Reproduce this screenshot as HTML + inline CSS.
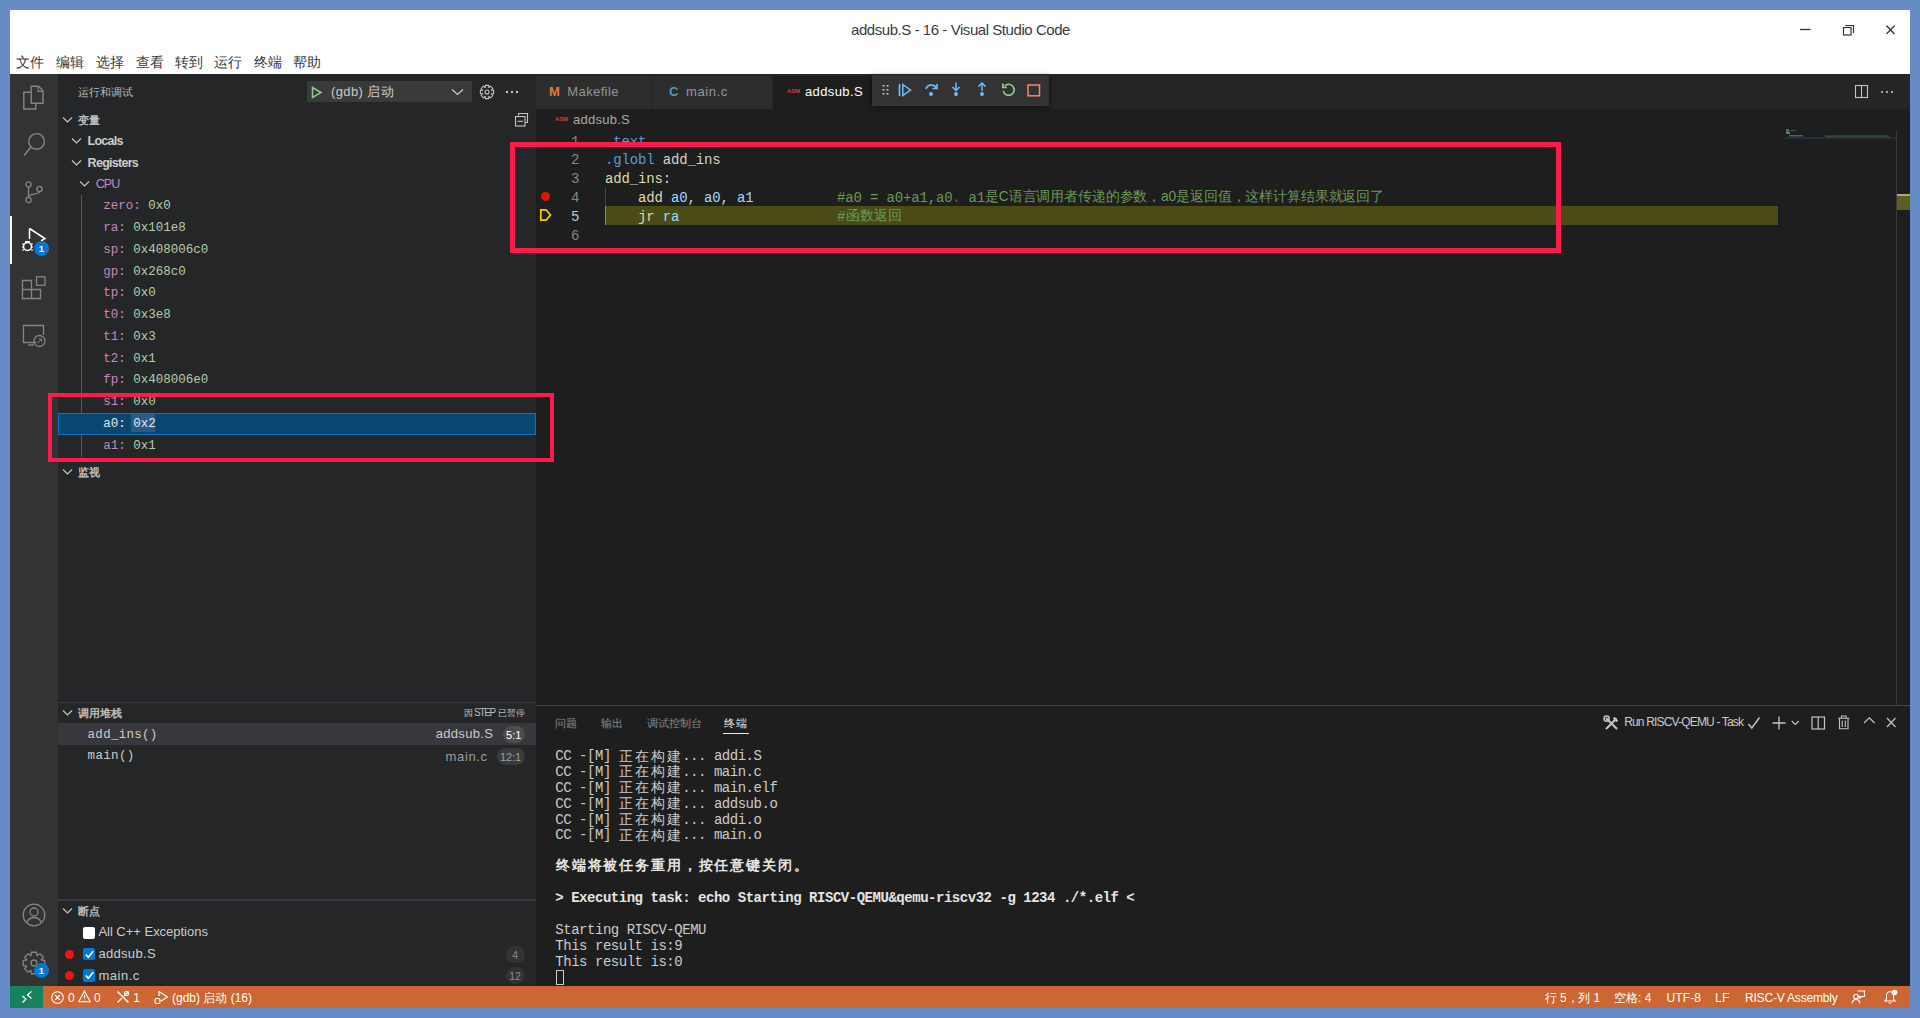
<!DOCTYPE html>
<html><head><meta charset="utf-8"><style>*{margin:0;padding:0;box-sizing:border-box}html,body{width:1920px;height:1018px;overflow:hidden;background:#678bc4}.a{position:absolute;white-space:pre}svg.a{overflow:visible}</style></head><body>
<div class="a" style="left:10px;top:10px;width:1900px;height:64px;background:#ffffff;"></div>
<div class="a" style="left:10px;top:74px;width:1900px;height:912px;background:#1e1e1e;"></div>
<div class="a t" id="t0" style="left:851px;top:20.00px;line-height:20px;font-family:'Liberation Sans',sans-serif;font-size:15px;font-weight:400;color:#3b3b3b;letter-spacing:-0.443px;">addsub.S - 16 - Visual Studio Code</div>
<svg class="a" style="left:1798px;top:22px;" width="100" height="16" viewBox="0 0 100 16"><line x1="2" y1="7.5" x2="12.5" y2="7.5" stroke="#333" stroke-width="1.3"/><rect x="45.5" y="5.5" width="7.5" height="7.5" fill="none" stroke="#333" stroke-width="1.2"/><path d="M47.5 3.5 H55.5 V11" fill="none" stroke="#333" stroke-width="1.2"/><path d="M88.5 3.8 L96.5 12 M96.5 3.8 L88.5 12" stroke="#333" stroke-width="1.3"/></svg>
<div class="a t" id="t1" style="left:16px;top:53.00px;line-height:20px;font-family:'Liberation Sans',sans-serif;font-size:13.5px;font-weight:400;color:#3a3a3a;letter-spacing:0.000px;">文件</div>
<div class="a t" id="t2" style="left:56px;top:53.00px;line-height:20px;font-family:'Liberation Sans',sans-serif;font-size:13.5px;font-weight:400;color:#3a3a3a;letter-spacing:0.000px;">编辑</div>
<div class="a t" id="t3" style="left:96px;top:53.00px;line-height:20px;font-family:'Liberation Sans',sans-serif;font-size:13.5px;font-weight:400;color:#3a3a3a;letter-spacing:0.000px;">选择</div>
<div class="a t" id="t4" style="left:135.5px;top:53.00px;line-height:20px;font-family:'Liberation Sans',sans-serif;font-size:13.5px;font-weight:400;color:#3a3a3a;letter-spacing:0.000px;">查看</div>
<div class="a t" id="t5" style="left:174.5px;top:53.00px;line-height:20px;font-family:'Liberation Sans',sans-serif;font-size:13.5px;font-weight:400;color:#3a3a3a;letter-spacing:0.000px;">转到</div>
<div class="a t" id="t6" style="left:214px;top:53.00px;line-height:20px;font-family:'Liberation Sans',sans-serif;font-size:13.5px;font-weight:400;color:#3a3a3a;letter-spacing:0.000px;">运行</div>
<div class="a t" id="t7" style="left:254px;top:53.00px;line-height:20px;font-family:'Liberation Sans',sans-serif;font-size:13.5px;font-weight:400;color:#3a3a3a;letter-spacing:0.000px;">终端</div>
<div class="a t" id="t8" style="left:293px;top:53.00px;line-height:20px;font-family:'Liberation Sans',sans-serif;font-size:13.5px;font-weight:400;color:#3a3a3a;letter-spacing:0.000px;">帮助</div>
<div class="a" style="left:10px;top:74px;width:48px;height:912px;background:#333333;"></div>
<div class="a" style="left:10px;top:216px;width:2px;height:48px;background:#ffffff;"></div>
<svg class="a" style="left:22px;top:85px;" width="24" height="25" viewBox="0 0 24 25"><path d="M9.2 1.3 H16.5 L21 5.8 V18.2 H9.2 Z" fill="none" stroke="#858585" stroke-width="1.4"/><path d="M16 1.5 V6.3 H21" fill="none" stroke="#858585" stroke-width="1.2"/><path d="M9.2 7.3 H1.8 V24 H13.8 V18.2" fill="none" stroke="#858585" stroke-width="1.4"/></svg>
<svg class="a" style="left:22px;top:132px;" width="24" height="24" viewBox="0 0 24 24"><circle cx="14.6" cy="9.4" r="7.8" fill="none" stroke="#858585" stroke-width="1.4"/><path d="M9 15 L2 23.5" stroke="#858585" stroke-width="1.5"/></svg>
<svg class="a" style="left:22px;top:180px;" width="24" height="24" viewBox="0 0 24 24"><circle cx="6.5" cy="4.5" r="2.6" fill="none" stroke="#858585" stroke-width="1.3"/><circle cx="17.5" cy="9" r="2.6" fill="none" stroke="#858585" stroke-width="1.3"/><circle cx="6.5" cy="20" r="2.6" fill="none" stroke="#858585" stroke-width="1.3"/><path d="M6.5 7 V17.5 M17.5 11.5 C17.5 15 6.5 13 6.5 17" fill="none" stroke="#858585" stroke-width="1.3"/></svg>
<svg class="a" style="left:20px;top:226px;" width="28" height="28" viewBox="0 0 28 28"><path d="M9.5 2.5 V13 M9.5 2.5 L25 12.5 L21 15" fill="none" stroke="#fff" stroke-width="1.5"/><circle cx="7.5" cy="20.5" r="4" fill="none" stroke="#fff" stroke-width="1.5"/><path d="M2 18 H4 M2 21 H4 M2 24 H4 M11 18 H13 M11 21 H13 M11 24 H13 M5 15.5 L10 15.5" stroke="#fff" stroke-width="1.2"/></svg>
<div class="a" style="left:34px;top:240.5px;width:15px;height:15px;border-radius:50%;background:#0078d4;color:#fff;font:bold 9.5px/15px 'Liberation Sans';text-align:center">1</div>
<svg class="a" style="left:22px;top:276px;" width="24" height="24" viewBox="0 0 24 24"><path d="M0.5 4.5 H9.5 V13.5 H18.5 V22.5 H0.5 Z M0.5 13.5 H9.5 V22.5" fill="none" stroke="#858585" stroke-width="1.3"/><rect x="14.5" y="0.8" width="8.5" height="8.5" fill="none" stroke="#858585" stroke-width="1.3"/></svg>
<svg class="a" style="left:22px;top:324px;" width="24" height="24" viewBox="0 0 24 24"><path d="M14 18.5 H1.5 V1.5 H21.5 V11" fill="none" stroke="#858585" stroke-width="1.3"/><path d="M6 21 H12" stroke="#858585" stroke-width="1.3"/><circle cx="17.5" cy="17" r="5.5" fill="none" stroke="#858585" stroke-width="1.3"/><path d="M15.5 19 L19.5 15 M17 15 H19.5 V17.5" fill="none" stroke="#858585" stroke-width="1"/></svg>
<svg class="a" style="left:22px;top:903px;" width="24" height="24" viewBox="0 0 24 24"><circle cx="12" cy="12" r="10.8" fill="none" stroke="#858585" stroke-width="1.3"/><circle cx="12" cy="9" r="4" fill="none" stroke="#858585" stroke-width="1.3"/><path d="M4.8 19.5 C6.5 15.5 9 14.5 12 14.5 C15 14.5 17.5 15.5 19.2 19.5" fill="none" stroke="#858585" stroke-width="1.3"/></svg>
<svg class="a" style="left:22px;top:951px;" width="24" height="24" viewBox="0 0 24 24"><polygon points="22.73,9.60 22.73,14.40 19.55,15.19 19.60,15.08 21.29,17.89 17.89,21.29 15.08,19.60 15.19,19.55 14.40,22.73 9.60,22.73 8.81,19.55 8.92,19.60 6.11,21.29 2.71,17.89 4.40,15.08 4.45,15.19 1.27,14.40 1.27,9.60 4.45,8.81 4.40,8.92 2.71,6.11 6.11,2.71 8.92,4.40 8.81,4.45 9.60,1.27 14.40,1.27 15.19,4.45 15.08,4.40 17.89,2.71 21.29,6.11 19.60,8.92 19.55,8.81" fill="none" stroke="#858585" stroke-width="1.3"/><circle cx="12" cy="12" r="3" fill="none" stroke="#858585" stroke-width="1.3"/></svg>
<div class="a" style="left:34px;top:962.5px;width:15px;height:15px;border-radius:50%;background:#0078d4;color:#fff;font:bold 9.5px/15px 'Liberation Sans';text-align:center">1</div>
<div class="a" style="left:58px;top:74px;width:478px;height:912px;background:#252628;"></div>
<div class="a t" id="t9" style="left:77.5px;top:82.00px;line-height:20px;font-family:'Liberation Sans',sans-serif;font-size:11px;font-weight:400;color:#bbbbbb;letter-spacing:0.200px;">运行和调试</div>
<div class="a" style="left:307px;top:81px;width:165px;height:21px;background:#3a3a3a;"></div>
<svg class="a" style="left:311px;top:86px;" width="12" height="13" viewBox="0 0 12 13"><path d="M1.5 1.5 L10 6.5 L1.5 11.5 Z" fill="none" stroke="#89d185" stroke-width="1.5"/></svg>
<div class="a t" id="t10" style="left:331px;top:82.00px;line-height:20px;font-family:'Liberation Sans',sans-serif;font-size:13px;font-weight:400;color:#cccccc;letter-spacing:0.379px;">(gdb) 启动</div>
<svg class="a" style="left:451px;top:88px;" width="13" height="8" viewBox="0 0 13 8"><path d="M1 1.5 L6.5 6.5 L12 1.5" fill="none" stroke="#cccccc" stroke-width="1.2"/></svg>
<svg class="a" style="left:479px;top:84px;" width="16" height="16" viewBox="0 0 16 16"><polygon points="14.61,6.38 14.61,9.62 12.57,10.04 12.67,9.79 13.81,11.53 11.53,13.81 9.79,12.67 10.04,12.57 9.62,14.61 6.38,14.61 5.96,12.57 6.21,12.67 4.47,13.81 2.19,11.53 3.33,9.79 3.43,10.04 1.39,9.62 1.39,6.38 3.43,5.96 3.33,6.21 2.19,4.47 4.47,2.19 6.21,3.33 5.96,3.43 6.38,1.39 9.62,1.39 10.04,3.43 9.79,3.33 11.53,2.19 13.81,4.47 12.67,6.21 12.57,5.96" fill="none" stroke="#c5c5c5" stroke-width="1.1"/><circle cx="8" cy="8" r="2" fill="none" stroke="#c5c5c5" stroke-width="1.1"/></svg>
<svg class="a" style="left:505px;top:90px;" width="16" height="4" viewBox="0 0 16 4"><circle cx="2" cy="2" r="1.2" fill="#c5c5c5"/><circle cx="7" cy="2" r="1.2" fill="#c5c5c5"/><circle cx="12" cy="2" r="1.2" fill="#c5c5c5"/></svg>
<svg class="a" style="left:514px;top:112px;" width="16" height="16" viewBox="0 0 16 16"><path d="M4.5 3.5 V1.5 H13.5 V10.5 H11.5" fill="none" stroke="#c5c5c5" stroke-width="1.1"/><rect x="1.5" y="4.5" width="9.5" height="9.5" fill="none" stroke="#c5c5c5" stroke-width="1.1"/><path d="M3.5 9.3 H9" stroke="#c5c5c5" stroke-width="1.1"/></svg>
<svg class="a" style="left:62px;top:115.5px;" width="12" height="8" viewBox="0 0 12 8"><path d="M1 1.5 L5.5 6 L10 1.5" fill="none" stroke="#c5c5c5" stroke-width="1.2"/></svg>
<div class="a t" id="t11" style="left:77.5px;top:109.50px;line-height:20px;font-family:'Liberation Sans',sans-serif;font-size:11px;font-weight:700;color:#bbbbbb;letter-spacing:0.500px;">变量</div>
<svg class="a" style="left:71px;top:137px;" width="12" height="8" viewBox="0 0 12 8"><path d="M1 1.5 L5.5 6 L10 1.5" fill="none" stroke="#c5c5c5" stroke-width="1.2"/></svg>
<div class="a t" id="t12" style="left:87.6px;top:131.00px;line-height:20px;font-family:'Liberation Sans',sans-serif;font-size:12.5px;font-weight:700;color:#cccccc;letter-spacing:-0.768px;">Locals</div>
<svg class="a" style="left:71px;top:159px;" width="12" height="8" viewBox="0 0 12 8"><path d="M1 1.5 L5.5 6 L10 1.5" fill="none" stroke="#c5c5c5" stroke-width="1.2"/></svg>
<div class="a t" id="t13" style="left:87.6px;top:153.00px;line-height:20px;font-family:'Liberation Sans',sans-serif;font-size:12.5px;font-weight:700;color:#cccccc;letter-spacing:-0.720px;">Registers</div>
<svg class="a" style="left:79px;top:180px;" width="12" height="8" viewBox="0 0 12 8"><path d="M1 1.5 L5.5 6 L10 1.5" fill="none" stroke="#c5c5c5" stroke-width="1.2"/></svg>
<div class="a t" id="t14" style="left:95.8px;top:174.00px;line-height:20px;font-family:'Liberation Sans',sans-serif;font-size:12.5px;font-weight:400;color:#c586c0;letter-spacing:-0.969px;">CPU</div>
<div class="a" style="left:81px;top:195px;width:1px;height:262px;background:#585858;"></div>
<div class="a t" id="t15" style="left:103.3px;top:196.40px;line-height:20px;font-family:'Liberation Mono',monospace;font-size:12.5px;font-weight:400;color:#c586c0;letter-spacing:0.0px">zero:</div>
<div class="a t" id="t16" style="left:148.3px;top:196.40px;line-height:20px;font-family:'Liberation Mono',monospace;font-size:12.5px;font-weight:400;color:#b5cea8;letter-spacing:0.0px">0x0</div>
<div class="a t" id="t17" style="left:103.3px;top:218.16px;line-height:20px;font-family:'Liberation Mono',monospace;font-size:12.5px;font-weight:400;color:#c586c0;letter-spacing:0.0px">ra:</div>
<div class="a t" id="t18" style="left:133.3px;top:218.16px;line-height:20px;font-family:'Liberation Mono',monospace;font-size:12.5px;font-weight:400;color:#b5cea8;letter-spacing:0.0px">0x101e8</div>
<div class="a t" id="t19" style="left:103.3px;top:239.92px;line-height:20px;font-family:'Liberation Mono',monospace;font-size:12.5px;font-weight:400;color:#c586c0;letter-spacing:0.0px">sp:</div>
<div class="a t" id="t20" style="left:133.3px;top:239.92px;line-height:20px;font-family:'Liberation Mono',monospace;font-size:12.5px;font-weight:400;color:#b5cea8;letter-spacing:0.0px">0x408006c0</div>
<div class="a t" id="t21" style="left:103.3px;top:261.68px;line-height:20px;font-family:'Liberation Mono',monospace;font-size:12.5px;font-weight:400;color:#c586c0;letter-spacing:0.0px">gp:</div>
<div class="a t" id="t22" style="left:133.3px;top:261.68px;line-height:20px;font-family:'Liberation Mono',monospace;font-size:12.5px;font-weight:400;color:#b5cea8;letter-spacing:0.0px">0x268c0</div>
<div class="a t" id="t23" style="left:103.3px;top:283.44px;line-height:20px;font-family:'Liberation Mono',monospace;font-size:12.5px;font-weight:400;color:#c586c0;letter-spacing:0.0px">tp:</div>
<div class="a t" id="t24" style="left:133.3px;top:283.44px;line-height:20px;font-family:'Liberation Mono',monospace;font-size:12.5px;font-weight:400;color:#b5cea8;letter-spacing:0.0px">0x0</div>
<div class="a t" id="t25" style="left:103.3px;top:305.20px;line-height:20px;font-family:'Liberation Mono',monospace;font-size:12.5px;font-weight:400;color:#c586c0;letter-spacing:0.0px">t0:</div>
<div class="a t" id="t26" style="left:133.3px;top:305.20px;line-height:20px;font-family:'Liberation Mono',monospace;font-size:12.5px;font-weight:400;color:#b5cea8;letter-spacing:0.0px">0x3e8</div>
<div class="a t" id="t27" style="left:103.3px;top:326.96px;line-height:20px;font-family:'Liberation Mono',monospace;font-size:12.5px;font-weight:400;color:#c586c0;letter-spacing:0.0px">t1:</div>
<div class="a t" id="t28" style="left:133.3px;top:326.96px;line-height:20px;font-family:'Liberation Mono',monospace;font-size:12.5px;font-weight:400;color:#b5cea8;letter-spacing:0.0px">0x3</div>
<div class="a t" id="t29" style="left:103.3px;top:348.72px;line-height:20px;font-family:'Liberation Mono',monospace;font-size:12.5px;font-weight:400;color:#c586c0;letter-spacing:0.0px">t2:</div>
<div class="a t" id="t30" style="left:133.3px;top:348.72px;line-height:20px;font-family:'Liberation Mono',monospace;font-size:12.5px;font-weight:400;color:#b5cea8;letter-spacing:0.0px">0x1</div>
<div class="a t" id="t31" style="left:103.3px;top:370.48px;line-height:20px;font-family:'Liberation Mono',monospace;font-size:12.5px;font-weight:400;color:#c586c0;letter-spacing:0.0px">fp:</div>
<div class="a t" id="t32" style="left:133.3px;top:370.48px;line-height:20px;font-family:'Liberation Mono',monospace;font-size:12.5px;font-weight:400;color:#b5cea8;letter-spacing:0.0px">0x408006e0</div>
<div class="a t" id="t33" style="left:103.3px;top:392.24px;line-height:20px;font-family:'Liberation Mono',monospace;font-size:12.5px;font-weight:400;color:#c586c0;letter-spacing:0.0px">s1:</div>
<div class="a t" id="t34" style="left:133.3px;top:392.24px;line-height:20px;font-family:'Liberation Mono',monospace;font-size:12.5px;font-weight:400;color:#b5cea8;letter-spacing:0.0px">0x0</div>
<div class="a" style="left:57.5px;top:413.00000000000006px;width:478.5px;height:22.3px;background:#094771;border:1.5px solid #0b72bf;"></div>
<div class="a" style="left:131px;top:414.20000000000005px;width:24px;height:18px;background:#285b85;"></div>
<div class="a t" id="t35" style="left:103.3px;top:414.00px;line-height:20px;font-family:'Liberation Mono',monospace;font-size:12.5px;font-weight:400;color:#e8e8e8;letter-spacing:0.0px">a0:</div>
<div class="a t" id="t36" style="left:133.3px;top:414.00px;line-height:20px;font-family:'Liberation Mono',monospace;font-size:12.5px;font-weight:400;color:#e8e8e8;letter-spacing:0.0px">0x2</div>
<div class="a t" id="t37" style="left:103.3px;top:435.76px;line-height:20px;font-family:'Liberation Mono',monospace;font-size:12.5px;font-weight:400;color:#c586c0;letter-spacing:0.0px">a1:</div>
<div class="a t" id="t38" style="left:133.3px;top:435.76px;line-height:20px;font-family:'Liberation Mono',monospace;font-size:12.5px;font-weight:400;color:#b5cea8;letter-spacing:0.0px">0x1</div>
<svg class="a" style="left:62px;top:467.5px;" width="12" height="8" viewBox="0 0 12 8"><path d="M1 1.5 L5.5 6 L10 1.5" fill="none" stroke="#c5c5c5" stroke-width="1.2"/></svg>
<div class="a t" id="t39" style="left:77.5px;top:461.50px;line-height:20px;font-family:'Liberation Sans',sans-serif;font-size:11px;font-weight:700;color:#bbbbbb;letter-spacing:0.500px;">监视</div>
<div class="a" style="left:58px;top:701.5px;width:478px;height:1.6px;background:#3a3a3e;"></div>
<svg class="a" style="left:62px;top:709px;" width="12" height="8" viewBox="0 0 12 8"><path d="M1 1.5 L5.5 6 L10 1.5" fill="none" stroke="#c5c5c5" stroke-width="1.2"/></svg>
<div class="a t" id="t40" style="left:77.5px;top:703.00px;line-height:20px;font-family:'Liberation Sans',sans-serif;font-size:11px;font-weight:700;color:#bbbbbb;letter-spacing:0.250px;">调用堆栈</div>
<div class="a t" id="t41" style="left:463.5px;top:702.80px;line-height:20px;font-family:'Liberation Sans',sans-serif;font-size:8.8px;font-weight:400;color:#bbbbbb;letter-spacing:-0.400px;">因</div>
<div class="a t" id="t42" style="left:474px;top:702.60px;line-height:20px;font-family:'Liberation Sans',sans-serif;font-size:10px;font-weight:400;color:#bbbbbb;letter-spacing:-1.281px;">STEP</div>
<div class="a t" id="t43" style="left:497.7px;top:702.80px;line-height:20px;font-family:'Liberation Sans',sans-serif;font-size:8.8px;font-weight:400;color:#bbbbbb;letter-spacing:0.100px;">已暂停</div>
<div class="a" style="left:58px;top:723.3px;width:478px;height:21.7px;background:#37373d;"></div>
<div class="a t" id="t44" style="left:87.6px;top:724.50px;line-height:20px;font-family:'Liberation Mono',monospace;font-size:12.5px;font-weight:400;color:#cccccc;letter-spacing:0.276px;">add_ins()</div>
<div class="a t" id="t45" style="left:435.7px;top:724.00px;line-height:20px;font-family:'Liberation Sans',sans-serif;font-size:13px;font-weight:400;color:#cccccc;letter-spacing:0.320px;">addsub.S</div>
<div class="a" style="left:502.5px;top:726px;width:22px;height:17px;border-radius:9px;background:#4d4d4d"></div>
<div class="a t" id="t46" style="left:506px;top:724.50px;line-height:20px;font-family:'Liberation Sans',sans-serif;font-size:11px;font-weight:400;color:#ffffff;letter-spacing:0.068px;">5:1</div>
<div class="a t" id="t47" style="left:87.6px;top:746.00px;line-height:20px;font-family:'Liberation Mono',monospace;font-size:12.5px;font-weight:400;color:#cccccc;letter-spacing:0.331px;">main()</div>
<div class="a t" id="t48" style="left:445.6px;top:746.50px;line-height:20px;font-family:'Liberation Sans',sans-serif;font-size:13px;font-weight:400;color:#9d9d9d;letter-spacing:0.617px;">main.c</div>
<div class="a" style="left:496.5px;top:748px;width:28px;height:17px;border-radius:9px;background:#3a3a3a"></div>
<div class="a t" id="t49" style="left:500px;top:746.50px;line-height:20px;font-family:'Liberation Sans',sans-serif;font-size:11px;font-weight:400;color:#9d9d9d;letter-spacing:-0.105px;">12:1</div>
<div class="a" style="left:58px;top:899px;width:478px;height:1.6px;background:#3a3a3e;"></div>
<svg class="a" style="left:62px;top:907px;" width="12" height="8" viewBox="0 0 12 8"><path d="M1 1.5 L5.5 6 L10 1.5" fill="none" stroke="#c5c5c5" stroke-width="1.2"/></svg>
<div class="a t" id="t50" style="left:77.5px;top:901.00px;line-height:20px;font-family:'Liberation Sans',sans-serif;font-size:11px;font-weight:700;color:#bbbbbb;letter-spacing:0.500px;">断点</div>
<div class="a" style="left:82.6px;top:926.5px;width:12px;height:12px;background:#ffffff;border-radius:2px;"></div>
<div class="a t" id="t51" style="left:98.4px;top:922.00px;line-height:20px;font-family:'Liberation Sans',sans-serif;font-size:13px;font-weight:400;color:#cccccc;letter-spacing:-0.019px;">All C++ Exceptions</div>
<div class="a" style="left:65px;top:949.5px;width:9px;height:9px;border-radius:50%;background:#f01414"></div>
<div class="a" style="left:82.6px;top:947.7px;width:12.3px;height:12.6px;background:#0078d4;border-radius:2px;"></div>
<svg class="a" style="left:82.6px;top:947.7px;" width="13" height="13" viewBox="0 0 13 13"><path d="M2.8 6.5 L5.3 9.2 L10.2 3.3" fill="none" stroke="#fff" stroke-width="1.6"/></svg>
<div class="a t" id="t52" style="left:98.4px;top:944.00px;line-height:20px;font-family:'Liberation Sans',sans-serif;font-size:13px;font-weight:400;color:#cccccc;letter-spacing:0.320px;">addsub.S</div>
<div class="a" style="left:506px;top:945.5px;width:19px;height:17px;border-radius:9px;background:#333333"></div>
<div class="a t" id="t53" style="left:512.2px;top:944.50px;line-height:20px;font-family:'Liberation Sans',sans-serif;font-size:10.5px;font-weight:400;color:#8a8a8a;">4</div>
<div class="a" style="left:65px;top:971.2px;width:9px;height:9px;border-radius:50%;background:#f01414"></div>
<div class="a" style="left:82.6px;top:969.4000000000001px;width:12.3px;height:12.6px;background:#0078d4;border-radius:2px;"></div>
<svg class="a" style="left:82.6px;top:969.4000000000001px;" width="13" height="13" viewBox="0 0 13 13"><path d="M2.8 6.5 L5.3 9.2 L10.2 3.3" fill="none" stroke="#fff" stroke-width="1.6"/></svg>
<div class="a t" id="t54" style="left:98.4px;top:965.70px;line-height:20px;font-family:'Liberation Sans',sans-serif;font-size:13px;font-weight:400;color:#cccccc;letter-spacing:0.534px;">main.c</div>
<div class="a" style="left:506px;top:967.2px;width:19px;height:17px;border-radius:9px;background:#333333"></div>
<div class="a t" id="t55" style="left:509.2px;top:966.20px;line-height:20px;font-family:'Liberation Sans',sans-serif;font-size:10.5px;font-weight:400;color:#8a8a8a;">12</div>
<div class="a" style="left:47.5px;top:392.5px;width:506px;height:69px;border:4.8px solid #fc1c4c"></div>
<div class="a" style="left:536px;top:74px;width:1374px;height:35px;background:#252526;"></div>
<div class="a" style="left:536px;top:75.5px;width:116px;height:33.5px;background:#2d2d2d;"></div>
<div class="a" style="left:653px;top:75.5px;width:119px;height:33.5px;background:#2d2d2d;"></div>
<div class="a" style="left:773px;top:75.5px;width:99px;height:33.5px;background:#1e1e1e;"></div>
<div class="a t" id="t56" style="left:549px;top:82.00px;line-height:20px;font-family:'Liberation Sans',sans-serif;font-size:13px;font-weight:700;color:#e37933;letter-spacing:2.156px;">M</div>
<div class="a t" id="t57" style="left:567.3px;top:82.00px;line-height:20px;font-family:'Liberation Sans',sans-serif;font-size:13px;font-weight:400;color:#969696;letter-spacing:0.385px;">Makefile</div>
<div class="a t" id="t58" style="left:669px;top:82.00px;line-height:20px;font-family:'Liberation Sans',sans-serif;font-size:13px;font-weight:700;color:#519aba;letter-spacing:1.109px;">C</div>
<div class="a t" id="t59" style="left:686px;top:82.00px;line-height:20px;font-family:'Liberation Sans',sans-serif;font-size:13px;font-weight:400;color:#969696;letter-spacing:0.617px;">main.c</div>
<div class="a t" id="t60" style="left:787px;top:81.00px;line-height:20px;font-family:'Liberation Sans',sans-serif;font-size:6px;font-weight:700;color:#cc3e44;letter-spacing:-0.115px;">ASM</div>
<div class="a t" id="t61" style="left:805px;top:82.00px;line-height:20px;font-family:'Liberation Sans',sans-serif;font-size:13px;font-weight:400;color:#ffffff;letter-spacing:0.383px;">addsub.S</div>
<div class="a" style="left:872px;top:74.5px;width:177px;height:31px;background:#333333;box-shadow:0 2px 6px rgba(0,0,0,0.6)"></div>
<svg class="a" style="left:882px;top:84px;" width="8" height="12" viewBox="0 0 8 12"><g fill="#bbbbbb"><rect x="0.5" y="1" width="2" height="1.6"/><rect x="4.5" y="1" width="2" height="1.6"/><rect x="0.5" y="5" width="2" height="1.6"/><rect x="4.5" y="5" width="2" height="1.6"/><rect x="0.5" y="9" width="2" height="1.6"/><rect x="4.5" y="9" width="2" height="1.6"/></g></svg>
<svg class="a" style="left:898px;top:83px;" width="14" height="14" viewBox="0 0 14 14"><path d="M1.5 1 V13" stroke="#75beff" stroke-width="1.6"/><path d="M4.8 1.5 L12.5 7 L4.8 12.5 Z" fill="none" stroke="#75beff" stroke-width="1.5"/></svg>
<svg class="a" style="left:924px;top:82px;" width="15" height="15" viewBox="0 0 15 15"><path d="M2 7 C3 2.5 10 1.5 12.5 6" fill="none" stroke="#75beff" stroke-width="1.6"/><path d="M13 2 V6.5 H8.5" fill="none" stroke="#75beff" stroke-width="1.6"/><circle cx="7" cy="12" r="1.9" fill="#75beff"/></svg>
<svg class="a" style="left:951px;top:82px;" width="10" height="15" viewBox="0 0 10 15"><path d="M5 0.5 V8" stroke="#75beff" stroke-width="1.5"/><path d="M1.5 5 L5 8.5 L8.5 5" fill="none" stroke="#75beff" stroke-width="1.5"/><circle cx="5" cy="12" r="1.9" fill="#75beff"/></svg>
<svg class="a" style="left:977px;top:82px;" width="10" height="15" viewBox="0 0 10 15"><path d="M5 9 V1.5" stroke="#75beff" stroke-width="1.5"/><path d="M1.5 4.5 L5 1 L8.5 4.5" fill="none" stroke="#75beff" stroke-width="1.5"/><circle cx="5" cy="12" r="1.9" fill="#75beff"/></svg>
<svg class="a" style="left:1001px;top:82px;" width="15" height="15" viewBox="0 0 15 15"><path d="M3.5 4.2 A5.5 5.5 0 1 1 2.3 9" fill="none" stroke="#89d185" stroke-width="1.6"/><path d="M1.8 1.5 V5.5 H5.8" fill="none" stroke="#89d185" stroke-width="1.6"/></svg>
<svg class="a" style="left:1027px;top:84px;" width="14" height="13" viewBox="0 0 14 13"><rect x="1" y="1" width="11.5" height="10.8" fill="none" stroke="#f48771" stroke-width="1.5"/></svg>
<svg class="a" style="left:1854px;top:84px;" width="16" height="16" viewBox="0 0 16 16"><rect x="1.5" y="1.5" width="12" height="12" fill="none" stroke="#c5c5c5" stroke-width="1.1"/><path d="M7.5 1.5 V13.5" stroke="#c5c5c5" stroke-width="1.1"/></svg>
<svg class="a" style="left:1880px;top:90px;" width="16" height="4" viewBox="0 0 16 4"><circle cx="2" cy="2" r="1.1" fill="#c5c5c5"/><circle cx="7" cy="2" r="1.1" fill="#c5c5c5"/><circle cx="12" cy="2" r="1.1" fill="#c5c5c5"/></svg>
<div class="a t" id="t62" style="left:555px;top:109.00px;line-height:20px;font-family:'Liberation Sans',sans-serif;font-size:6px;font-weight:700;color:#cc3e44;letter-spacing:-0.115px;">ASM</div>
<div class="a t" id="t63" style="left:573px;top:110.00px;line-height:20px;font-family:'Liberation Sans',sans-serif;font-size:13px;font-weight:400;color:#a9a9a9;letter-spacing:0.258px;">addsub.S</div>
<div class="a" style="left:604.5px;top:205.65px;width:1173px;height:18.9px;background:#4b4b18;"></div>
<div class="a" style="left:605px;top:186.7px;width:1px;height:19px;background:#404040;"></div>
<div class="a" style="left:605px;top:205.6px;width:1px;height:19px;background:#8a8a5a;"></div>
<div class="a t" id="t64" style="left:571px;top:131.50px;line-height:20px;font-family:'Liberation Mono',monospace;font-size:14px;font-weight:400;color:#858585;letter-spacing:0px">1</div>
<div class="a t" id="t65" style="left:571px;top:150.40px;line-height:20px;font-family:'Liberation Mono',monospace;font-size:14px;font-weight:400;color:#858585;letter-spacing:0px">2</div>
<div class="a t" id="t66" style="left:571px;top:169.30px;line-height:20px;font-family:'Liberation Mono',monospace;font-size:14px;font-weight:400;color:#858585;letter-spacing:0px">3</div>
<div class="a t" id="t67" style="left:571px;top:188.20px;line-height:20px;font-family:'Liberation Mono',monospace;font-size:14px;font-weight:400;color:#858585;letter-spacing:0px">4</div>
<div class="a t" id="t68" style="left:571px;top:207.10px;line-height:20px;font-family:'Liberation Mono',monospace;font-size:14px;font-weight:400;color:#c6c6c6;letter-spacing:0px">5</div>
<div class="a t" id="t69" style="left:571px;top:226.00px;line-height:20px;font-family:'Liberation Mono',monospace;font-size:14px;font-weight:400;color:#858585;letter-spacing:0px">6</div>
<div class="a t" id="t70" style="left:605.0px;top:131.50px;line-height:20px;font-family:'Liberation Mono',monospace;font-size:14px;font-weight:400;color:#569cd6;letter-spacing:-0.15px">.text</div>
<div class="a t" id="t71" style="left:605.0px;top:150.40px;line-height:20px;font-family:'Liberation Mono',monospace;font-size:14px;font-weight:400;color:#569cd6;letter-spacing:-0.15px">.globl</div>
<div class="a t" id="t72" style="left:662.75px;top:150.40px;line-height:20px;font-family:'Liberation Mono',monospace;font-size:14px;font-weight:400;color:#d4d4d4;letter-spacing:-0.15px">add_ins</div>
<div class="a t" id="t73" style="left:605.0px;top:169.30px;line-height:20px;font-family:'Liberation Mono',monospace;font-size:14px;font-weight:400;color:#dcdcaa;letter-spacing:-0.15px">add_ins</div>
<div class="a t" id="t74" style="left:662.75px;top:169.30px;line-height:20px;font-family:'Liberation Mono',monospace;font-size:14px;font-weight:400;color:#d4d4d4;letter-spacing:-0.15px">:</div>
<div class="a t" id="t75" style="left:638.0px;top:188.20px;line-height:20px;font-family:'Liberation Mono',monospace;font-size:14px;font-weight:400;color:#dcdcaa;letter-spacing:-0.15px">add</div>
<div class="a t" id="t76" style="left:671.0px;top:188.20px;line-height:20px;font-family:'Liberation Mono',monospace;font-size:14px;font-weight:400;color:#9cdcfe;letter-spacing:-0.15px">a0</div>
<div class="a t" id="t77" style="left:687.5px;top:188.20px;line-height:20px;font-family:'Liberation Mono',monospace;font-size:14px;font-weight:400;color:#d4d4d4;letter-spacing:-0.15px">,</div>
<div class="a t" id="t78" style="left:704.0px;top:188.20px;line-height:20px;font-family:'Liberation Mono',monospace;font-size:14px;font-weight:400;color:#9cdcfe;letter-spacing:-0.15px">a0</div>
<div class="a t" id="t79" style="left:720.5px;top:188.20px;line-height:20px;font-family:'Liberation Mono',monospace;font-size:14px;font-weight:400;color:#d4d4d4;letter-spacing:-0.15px">,</div>
<div class="a t" id="t80" style="left:737.0px;top:188.20px;line-height:20px;font-family:'Liberation Mono',monospace;font-size:14px;font-weight:400;color:#9cdcfe;letter-spacing:-0.15px">a1</div>
<div class="a t" id="t81" style="left:638.0px;top:207.10px;line-height:20px;font-family:'Liberation Mono',monospace;font-size:14px;font-weight:400;color:#dcdcaa;letter-spacing:-0.15px">jr</div>
<div class="a t" id="t82" style="left:662.75px;top:207.10px;line-height:20px;font-family:'Liberation Mono',monospace;font-size:14px;font-weight:400;color:#9cdcfe;letter-spacing:-0.15px">ra</div>
<div class="a t" id="t83" style="left:837px;top:188.20px;line-height:20px;font-family:'Liberation Mono',monospace;font-size:14px;font-weight:400;color:#6a9955;letter-spacing:-0.15px">#a0 = a0+a1,a0</div>
<div class="a t" id="t84" style="left:952.5px;top:187.20px;line-height:20px;font-family:'Liberation Mono',monospace;font-size:13.75px;font-weight:400;color:#6a9955;">、</div>
<div class="a t" id="t85" style="left:968.4px;top:188.20px;line-height:20px;font-family:'Liberation Mono',monospace;font-size:14px;font-weight:400;color:#6a9955;letter-spacing:-0.15px">a1</div>
<div class="a t" id="t86" style="left:985px;top:187.20px;line-height:20px;font-family:'Liberation Sans',sans-serif;font-size:13.75px;font-weight:400;color:#6a9955;letter-spacing:-0.141px;">是C语言调用者传递的参数，a0是返回值，这样计算结果就返回了</div>
<div class="a t" id="t87" style="left:837px;top:207.10px;line-height:20px;font-family:'Liberation Mono',monospace;font-size:14px;font-weight:400;color:#6a9955;">#</div>
<div class="a t" id="t88" style="left:845.5px;top:206.10px;line-height:20px;font-family:'Liberation Sans',sans-serif;font-size:13.75px;font-weight:400;color:#6a9955;letter-spacing:0.250px;">函数返回</div>
<div class="a" style="left:540.5px;top:191.6px;width:9.2px;height:9.2px;border-radius:50%;background:#e51400"></div>
<svg class="a" style="left:539px;top:208.1px;" width="14" height="14" viewBox="0 0 14 14"><path d="M1.8 1.8 H7 L11.5 7 L7 12.2 H1.8 Z" fill="none" stroke="#ffcc00" stroke-width="1.7"/></svg>
<svg class="a" style="left:1785px;top:128px;" width="112" height="14" viewBox="0 0 112 14"><rect x="0" y="9.5" width="111" height="1" fill="#264f78" opacity="0.8"/><rect x="1" y="1" width="3" height="3" fill="#569cd6" opacity="0.6"/><rect x="5" y="2" width="6" height="1" fill="#888" opacity="0.5"/><rect x="1" y="4" width="4" height="2" fill="#dcdcaa" opacity="0.45"/><rect x="4" y="7" width="14" height="1.5" fill="#9cdcfe" opacity="0.35"/><rect x="40" y="7.5" width="64" height="1.2" fill="#6a9955" opacity="0.5"/></svg>
<div class="a" style="left:1896px;top:130px;width:1px;height:575px;background:#3a3a3a;"></div>
<div class="a" style="left:1897px;top:194px;width:13px;height:2px;background:#a8a890;"></div>
<div class="a" style="left:1897px;top:196px;width:13px;height:14px;background:#5e5e1e;"></div>
<div class="a" style="left:510px;top:142px;width:1050.5px;height:110.5px;border:5px solid #fc1c4c"></div>
<div class="a" style="left:536px;top:704.5px;width:1374px;height:1px;background:#444444;"></div>
<div class="a t" id="t89" style="left:555.3px;top:712.70px;line-height:20px;font-family:'Liberation Sans',sans-serif;font-size:11px;font-weight:400;color:#8b8b8b;letter-spacing:0.000px;">问题</div>
<div class="a t" id="t90" style="left:600.6px;top:712.70px;line-height:20px;font-family:'Liberation Sans',sans-serif;font-size:11px;font-weight:400;color:#8b8b8b;letter-spacing:0.000px;">输出</div>
<div class="a t" id="t91" style="left:646.7px;top:712.70px;line-height:20px;font-family:'Liberation Sans',sans-serif;font-size:11px;font-weight:400;color:#8b8b8b;letter-spacing:0.000px;">调试控制台</div>
<div class="a t" id="t92" style="left:724px;top:712.70px;line-height:20px;font-family:'Liberation Sans',sans-serif;font-size:11px;font-weight:400;color:#e7e7e7;letter-spacing:0.500px;">终端</div>
<div class="a" style="left:722.5px;top:732.5px;width:26px;height:1.2px;background:#e7e7e7;"></div>
<div class="a t" id="t93" style="left:1624.2px;top:712.20px;line-height:20px;font-family:'Liberation Sans',sans-serif;font-size:12px;font-weight:400;color:#cccccc;letter-spacing:-0.833px;">Run RISCV-QEMU - Task</div>
<svg class="a" style="left:1603px;top:715px;" width="17" height="17" viewBox="0 0 17 17"><path d="M3.5 13.5 L13 4 M3.5 3.5 L13.5 13.5" stroke="#c5c5c5" stroke-width="2" stroke-linecap="round"/><circle cx="3.6" cy="3.6" r="2.6" fill="none" stroke="#c5c5c5" stroke-width="1.5"/><path d="M11.5 1.8 L15.2 5.5 L13.5 7.2 L9.8 3.5 Z" fill="#c5c5c5"/></svg>
<svg class="a" style="left:1747px;top:716px;" width="14" height="14" viewBox="0 0 14 14"><path d="M1.5 8 L4.8 12 L12.5 1.5" fill="none" stroke="#c5c5c5" stroke-width="1.4"/></svg>
<svg class="a" style="left:1772px;top:715.5px;" width="15" height="15" viewBox="0 0 15 15"><path d="M7 0.5 V13.5 M0.5 7 H13.5" stroke="#c5c5c5" stroke-width="1.3"/></svg>
<svg class="a" style="left:1791px;top:720px;" width="9" height="6" viewBox="0 0 9 6"><path d="M0.8 1 L4.3 4.5 L7.8 1" fill="none" stroke="#c5c5c5" stroke-width="1.1"/></svg>
<svg class="a" style="left:1811px;top:716px;" width="15" height="14" viewBox="0 0 15 14"><rect x="1" y="1" width="12.5" height="12" fill="none" stroke="#c5c5c5" stroke-width="1.2"/><path d="M7.2 1 V13" stroke="#c5c5c5" stroke-width="1.2"/></svg>
<svg class="a" style="left:1837px;top:715px;" width="14" height="15" viewBox="0 0 14 15"><path d="M1 3.2 H12.5 M4.5 3 V1 H9 V3" fill="none" stroke="#c5c5c5" stroke-width="1.1"/><path d="M2.5 3.5 V13.8 H11 V3.5 M5.2 5.5 V12 M8.3 5.5 V12" fill="none" stroke="#c5c5c5" stroke-width="1.1"/></svg>
<svg class="a" style="left:1863px;top:716px;" width="13" height="9" viewBox="0 0 13 9"><path d="M1 7 L6.3 1.8 L11.6 7" fill="none" stroke="#c5c5c5" stroke-width="1.2"/></svg>
<svg class="a" style="left:1886px;top:717px;" width="11" height="12" viewBox="0 0 11 12"><path d="M1 1 L9.5 10 M9.5 1 L1 10" stroke="#c5c5c5" stroke-width="1.2"/></svg>
<div class="a t" id="t94" style="left:555.3px;top:745.90px;line-height:20px;font-family:'Liberation Mono',monospace;font-size:14px;font-weight:400;color:#cccccc;letter-spacing:-0.47px">CC -[M] </div>
<div class="a t" id="t95" style="left:619.2399999999996px;top:745.50px;line-height:20px;font-family:'Liberation Sans',sans-serif;font-size:14px;font-weight:400;color:#cccccc;letter-spacing:2.000px;">正</div>
<div class="a t" id="t96" style="left:635.0999999999996px;top:745.50px;line-height:20px;font-family:'Liberation Sans',sans-serif;font-size:14px;font-weight:400;color:#cccccc;letter-spacing:2.000px;">在</div>
<div class="a t" id="t97" style="left:650.9599999999996px;top:745.50px;line-height:20px;font-family:'Liberation Sans',sans-serif;font-size:14px;font-weight:400;color:#cccccc;letter-spacing:2.000px;">构</div>
<div class="a t" id="t98" style="left:666.8199999999996px;top:745.50px;line-height:20px;font-family:'Liberation Sans',sans-serif;font-size:14px;font-weight:400;color:#cccccc;letter-spacing:2.000px;">建</div>
<div class="a t" id="t99" style="left:682.1799999999996px;top:745.90px;line-height:20px;font-family:'Liberation Mono',monospace;font-size:14px;font-weight:400;color:#cccccc;letter-spacing:-0.47px">... addi.S</div>
<div class="a t" id="t100" style="left:555.3px;top:761.80px;line-height:20px;font-family:'Liberation Mono',monospace;font-size:14px;font-weight:400;color:#cccccc;letter-spacing:-0.47px">CC -[M] </div>
<div class="a t" id="t101" style="left:619.2399999999996px;top:761.40px;line-height:20px;font-family:'Liberation Sans',sans-serif;font-size:14px;font-weight:400;color:#cccccc;letter-spacing:2.000px;">正</div>
<div class="a t" id="t102" style="left:635.0999999999996px;top:761.40px;line-height:20px;font-family:'Liberation Sans',sans-serif;font-size:14px;font-weight:400;color:#cccccc;letter-spacing:2.000px;">在</div>
<div class="a t" id="t103" style="left:650.9599999999996px;top:761.40px;line-height:20px;font-family:'Liberation Sans',sans-serif;font-size:14px;font-weight:400;color:#cccccc;letter-spacing:2.000px;">构</div>
<div class="a t" id="t104" style="left:666.8199999999996px;top:761.40px;line-height:20px;font-family:'Liberation Sans',sans-serif;font-size:14px;font-weight:400;color:#cccccc;letter-spacing:2.000px;">建</div>
<div class="a t" id="t105" style="left:682.1799999999996px;top:761.80px;line-height:20px;font-family:'Liberation Mono',monospace;font-size:14px;font-weight:400;color:#cccccc;letter-spacing:-0.47px">... main.c</div>
<div class="a t" id="t106" style="left:555.3px;top:777.70px;line-height:20px;font-family:'Liberation Mono',monospace;font-size:14px;font-weight:400;color:#cccccc;letter-spacing:-0.47px">CC -[M] </div>
<div class="a t" id="t107" style="left:619.2399999999996px;top:777.30px;line-height:20px;font-family:'Liberation Sans',sans-serif;font-size:14px;font-weight:400;color:#cccccc;letter-spacing:2.000px;">正</div>
<div class="a t" id="t108" style="left:635.0999999999996px;top:777.30px;line-height:20px;font-family:'Liberation Sans',sans-serif;font-size:14px;font-weight:400;color:#cccccc;letter-spacing:2.000px;">在</div>
<div class="a t" id="t109" style="left:650.9599999999996px;top:777.30px;line-height:20px;font-family:'Liberation Sans',sans-serif;font-size:14px;font-weight:400;color:#cccccc;letter-spacing:2.000px;">构</div>
<div class="a t" id="t110" style="left:666.8199999999996px;top:777.30px;line-height:20px;font-family:'Liberation Sans',sans-serif;font-size:14px;font-weight:400;color:#cccccc;letter-spacing:2.000px;">建</div>
<div class="a t" id="t111" style="left:682.1799999999996px;top:777.70px;line-height:20px;font-family:'Liberation Mono',monospace;font-size:14px;font-weight:400;color:#cccccc;letter-spacing:-0.47px">... main.elf</div>
<div class="a t" id="t112" style="left:555.3px;top:793.60px;line-height:20px;font-family:'Liberation Mono',monospace;font-size:14px;font-weight:400;color:#cccccc;letter-spacing:-0.47px">CC -[M] </div>
<div class="a t" id="t113" style="left:619.2399999999996px;top:793.20px;line-height:20px;font-family:'Liberation Sans',sans-serif;font-size:14px;font-weight:400;color:#cccccc;letter-spacing:2.000px;">正</div>
<div class="a t" id="t114" style="left:635.0999999999996px;top:793.20px;line-height:20px;font-family:'Liberation Sans',sans-serif;font-size:14px;font-weight:400;color:#cccccc;letter-spacing:2.000px;">在</div>
<div class="a t" id="t115" style="left:650.9599999999996px;top:793.20px;line-height:20px;font-family:'Liberation Sans',sans-serif;font-size:14px;font-weight:400;color:#cccccc;letter-spacing:2.000px;">构</div>
<div class="a t" id="t116" style="left:666.8199999999996px;top:793.20px;line-height:20px;font-family:'Liberation Sans',sans-serif;font-size:14px;font-weight:400;color:#cccccc;letter-spacing:2.000px;">建</div>
<div class="a t" id="t117" style="left:682.1799999999996px;top:793.60px;line-height:20px;font-family:'Liberation Mono',monospace;font-size:14px;font-weight:400;color:#cccccc;letter-spacing:-0.47px">... addsub.o</div>
<div class="a t" id="t118" style="left:555.3px;top:809.50px;line-height:20px;font-family:'Liberation Mono',monospace;font-size:14px;font-weight:400;color:#cccccc;letter-spacing:-0.47px">CC -[M] </div>
<div class="a t" id="t119" style="left:619.2399999999996px;top:809.10px;line-height:20px;font-family:'Liberation Sans',sans-serif;font-size:14px;font-weight:400;color:#cccccc;letter-spacing:2.000px;">正</div>
<div class="a t" id="t120" style="left:635.0999999999996px;top:809.10px;line-height:20px;font-family:'Liberation Sans',sans-serif;font-size:14px;font-weight:400;color:#cccccc;letter-spacing:2.000px;">在</div>
<div class="a t" id="t121" style="left:650.9599999999996px;top:809.10px;line-height:20px;font-family:'Liberation Sans',sans-serif;font-size:14px;font-weight:400;color:#cccccc;letter-spacing:2.000px;">构</div>
<div class="a t" id="t122" style="left:666.8199999999996px;top:809.10px;line-height:20px;font-family:'Liberation Sans',sans-serif;font-size:14px;font-weight:400;color:#cccccc;letter-spacing:2.000px;">建</div>
<div class="a t" id="t123" style="left:682.1799999999996px;top:809.50px;line-height:20px;font-family:'Liberation Mono',monospace;font-size:14px;font-weight:400;color:#cccccc;letter-spacing:-0.47px">... addi.o</div>
<div class="a t" id="t124" style="left:555.3px;top:825.40px;line-height:20px;font-family:'Liberation Mono',monospace;font-size:14px;font-weight:400;color:#cccccc;letter-spacing:-0.47px">CC -[M] </div>
<div class="a t" id="t125" style="left:619.2399999999996px;top:825.00px;line-height:20px;font-family:'Liberation Sans',sans-serif;font-size:14px;font-weight:400;color:#cccccc;letter-spacing:2.000px;">正</div>
<div class="a t" id="t126" style="left:635.0999999999996px;top:825.00px;line-height:20px;font-family:'Liberation Sans',sans-serif;font-size:14px;font-weight:400;color:#cccccc;letter-spacing:2.000px;">在</div>
<div class="a t" id="t127" style="left:650.9599999999996px;top:825.00px;line-height:20px;font-family:'Liberation Sans',sans-serif;font-size:14px;font-weight:400;color:#cccccc;letter-spacing:2.000px;">构</div>
<div class="a t" id="t128" style="left:666.8199999999996px;top:825.00px;line-height:20px;font-family:'Liberation Sans',sans-serif;font-size:14px;font-weight:400;color:#cccccc;letter-spacing:2.000px;">建</div>
<div class="a t" id="t129" style="left:682.1799999999996px;top:825.40px;line-height:20px;font-family:'Liberation Mono',monospace;font-size:14px;font-weight:400;color:#cccccc;letter-spacing:-0.47px">... main.o</div>
<div class="a t" id="t130" style="left:555.8px;top:854.80px;line-height:20px;font-family:'Liberation Sans',sans-serif;font-size:14px;font-weight:700;color:#e5e5e5;letter-spacing:2.000px;">终</div>
<div class="a t" id="t131" style="left:571.66px;top:854.80px;line-height:20px;font-family:'Liberation Sans',sans-serif;font-size:14px;font-weight:700;color:#e5e5e5;letter-spacing:2.000px;">端</div>
<div class="a t" id="t132" style="left:587.52px;top:854.80px;line-height:20px;font-family:'Liberation Sans',sans-serif;font-size:14px;font-weight:700;color:#e5e5e5;letter-spacing:2.000px;">将</div>
<div class="a t" id="t133" style="left:603.38px;top:854.80px;line-height:20px;font-family:'Liberation Sans',sans-serif;font-size:14px;font-weight:700;color:#e5e5e5;letter-spacing:2.000px;">被</div>
<div class="a t" id="t134" style="left:619.24px;top:854.80px;line-height:20px;font-family:'Liberation Sans',sans-serif;font-size:14px;font-weight:700;color:#e5e5e5;letter-spacing:2.000px;">任</div>
<div class="a t" id="t135" style="left:635.1px;top:854.80px;line-height:20px;font-family:'Liberation Sans',sans-serif;font-size:14px;font-weight:700;color:#e5e5e5;letter-spacing:2.000px;">务</div>
<div class="a t" id="t136" style="left:650.96px;top:854.80px;line-height:20px;font-family:'Liberation Sans',sans-serif;font-size:14px;font-weight:700;color:#e5e5e5;letter-spacing:2.000px;">重</div>
<div class="a t" id="t137" style="left:666.82px;top:854.80px;line-height:20px;font-family:'Liberation Sans',sans-serif;font-size:14px;font-weight:700;color:#e5e5e5;letter-spacing:2.000px;">用</div>
<div class="a t" id="t138" style="left:682.6800000000001px;top:854.80px;line-height:20px;font-family:'Liberation Sans',sans-serif;font-size:14px;font-weight:700;color:#e5e5e5;letter-spacing:2.000px;">，</div>
<div class="a t" id="t139" style="left:698.5400000000001px;top:854.80px;line-height:20px;font-family:'Liberation Sans',sans-serif;font-size:14px;font-weight:700;color:#e5e5e5;letter-spacing:2.000px;">按</div>
<div class="a t" id="t140" style="left:714.4000000000001px;top:854.80px;line-height:20px;font-family:'Liberation Sans',sans-serif;font-size:14px;font-weight:700;color:#e5e5e5;letter-spacing:2.000px;">任</div>
<div class="a t" id="t141" style="left:730.2600000000001px;top:854.80px;line-height:20px;font-family:'Liberation Sans',sans-serif;font-size:14px;font-weight:700;color:#e5e5e5;letter-spacing:2.000px;">意</div>
<div class="a t" id="t142" style="left:746.1200000000001px;top:854.80px;line-height:20px;font-family:'Liberation Sans',sans-serif;font-size:14px;font-weight:700;color:#e5e5e5;letter-spacing:2.000px;">键</div>
<div class="a t" id="t143" style="left:761.9800000000001px;top:854.80px;line-height:20px;font-family:'Liberation Sans',sans-serif;font-size:14px;font-weight:700;color:#e5e5e5;letter-spacing:2.000px;">关</div>
<div class="a t" id="t144" style="left:777.8400000000001px;top:854.80px;line-height:20px;font-family:'Liberation Sans',sans-serif;font-size:14px;font-weight:700;color:#e5e5e5;letter-spacing:2.000px;">闭</div>
<div class="a t" id="t145" style="left:793.7000000000002px;top:854.80px;line-height:20px;font-family:'Liberation Sans',sans-serif;font-size:14px;font-weight:700;color:#e5e5e5;letter-spacing:2.000px;">。</div>
<div class="a t" id="t146" style="left:555.3px;top:887.70px;line-height:20px;font-family:'Liberation Mono',monospace;font-size:14px;font-weight:700;color:#e5e5e5;letter-spacing:-0.47px">> Executing task: echo Starting RISCV-QEMU&qemu-riscv32 -g 1234 ./*.elf <</div>
<div class="a t" id="t147" style="left:555.3px;top:920.20px;line-height:20px;font-family:'Liberation Mono',monospace;font-size:14px;font-weight:400;color:#cccccc;letter-spacing:-0.47px">Starting RISCV-QEMU</div>
<div class="a t" id="t148" style="left:555.3px;top:936.20px;line-height:20px;font-family:'Liberation Mono',monospace;font-size:14px;font-weight:400;color:#cccccc;letter-spacing:-0.47px">This result is:9</div>
<div class="a t" id="t149" style="left:555.3px;top:952.20px;line-height:20px;font-family:'Liberation Mono',monospace;font-size:14px;font-weight:400;color:#cccccc;letter-spacing:-0.47px">This result is:0</div>
<div class="a" style="left:555.5px;top:969.5px;width:8px;height:15px;background:transparent;border:1px solid #cccccc;"></div>
<div class="a" style="left:10px;top:986px;width:1900px;height:22px;background:#cc6633;"></div>
<div class="a" style="left:10px;top:986px;width:33px;height:22px;background:#16825d;"></div>
<svg class="a" style="left:21px;top:990px;" width="12" height="14" viewBox="0 0 12 14"><path d="M1.5 6 L5 9 L1.5 12.5 M10.5 1.5 L6.5 5 L10.5 8.5" fill="none" stroke="#ffffff" stroke-width="1.3"/></svg>
<svg class="a" style="left:51px;top:991px;" width="14" height="14" viewBox="0 0 14 14"><circle cx="6.5" cy="6.5" r="5.8" fill="none" stroke="#fff" stroke-width="1.1"/><path d="M4 4 L9 9 M9 4 L4 9" stroke="#fff" stroke-width="1.1"/></svg>
<div class="a t" id="t150" style="left:68px;top:987.60px;line-height:20px;font-family:'Liberation Sans',sans-serif;font-size:12px;font-weight:400;color:#ffffff;letter-spacing:0.312px;">0</div>
<svg class="a" style="left:78px;top:990px;" width="14" height="14" viewBox="0 0 14 14"><path d="M6.5 1.2 L12.3 11.8 H0.7 Z" fill="none" stroke="#fff" stroke-width="1.1"/><path d="M6.5 5 V8.5 M6.5 9.8 V10.6" stroke="#fff" stroke-width="1.1"/></svg>
<div class="a t" id="t151" style="left:94px;top:987.60px;line-height:20px;font-family:'Liberation Sans',sans-serif;font-size:12px;font-weight:400;color:#ffffff;letter-spacing:0.312px;">0</div>
<svg class="a" style="left:116px;top:990px;" width="14" height="14" viewBox="0 0 14 14"><path d="M1.5 12.5 L6 8 M8 6 L12.5 1.5 M1.5 1.5 L12.5 12.5" stroke="#fff" stroke-width="1.4"/><circle cx="10.5" cy="3.5" r="2" fill="none" stroke="#fff" stroke-width="1.1"/></svg>
<div class="a t" id="t152" style="left:133.3px;top:987.60px;line-height:20px;font-family:'Liberation Sans',sans-serif;font-size:12px;font-weight:400;color:#ffffff;letter-spacing:-0.188px;">1</div>
<svg class="a" style="left:154px;top:990px;" width="15" height="15" viewBox="0 0 15 15"><path d="M5 1.5 L13.5 7 L7 11" fill="none" stroke="#fff" stroke-width="1.2"/><path d="M5 1.5 V6" stroke="#fff" stroke-width="1.2"/><rect x="1" y="8.5" width="5" height="5" rx="1.5" fill="none" stroke="#fff" stroke-width="1.1"/></svg>
<div class="a t" id="t153" style="left:172px;top:987.60px;line-height:20px;font-family:'Liberation Sans',sans-serif;font-size:12px;font-weight:400;color:#ffffff;letter-spacing:-0.002px;">(gdb) 启动 (16)</div>
<div class="a t" id="t154" style="left:1545px;top:987.80px;line-height:20px;font-family:'Liberation Sans',sans-serif;font-size:12px;font-weight:400;color:#ffffff;letter-spacing:-0.145px;">行 5，列 1</div>
<div class="a t" id="t155" style="left:1614px;top:987.80px;line-height:20px;font-family:'Liberation Sans',sans-serif;font-size:12px;font-weight:400;color:#ffffff;letter-spacing:0.031px;">空格: 4</div>
<div class="a t" id="t156" style="left:1666.6px;top:987.80px;line-height:20px;font-family:'Liberation Sans',sans-serif;font-size:12px;font-weight:400;color:#ffffff;letter-spacing:0.100px;">UTF-8</div>
<div class="a t" id="t157" style="left:1715px;top:987.80px;line-height:20px;font-family:'Liberation Sans',sans-serif;font-size:12px;font-weight:400;color:#ffffff;letter-spacing:0.242px;">LF</div>
<div class="a t" id="t158" style="left:1745px;top:987.80px;line-height:20px;font-family:'Liberation Sans',sans-serif;font-size:12px;font-weight:400;color:#ffffff;letter-spacing:-0.191px;">RISC-V Assembly</div>
<svg class="a" style="left:1851px;top:990px;" width="16" height="16" viewBox="0 0 16 16"><circle cx="5" cy="6.5" r="2.3" fill="none" stroke="#fff" stroke-width="1.1"/><path d="M1 13.5 C1.5 10.5 3 9.5 5 9.5 C7 9.5 8.5 10.5 9 13.5" fill="none" stroke="#fff" stroke-width="1.1"/><path d="M6.5 1 H13.5 V6.5 H10.5 L8.8 8.2 V6.5 H6.5" fill="none" stroke="#fff" stroke-width="1.1"/></svg>
<svg class="a" style="left:1882px;top:989px;" width="16" height="16" viewBox="0 0 16 16"><path d="M3 12 H13 L11.5 10 V6.5 C11.5 4 9.8 2.8 8 2.8 C6.2 2.8 4.5 4 4.5 6.5 V10 Z" fill="none" stroke="#fff" stroke-width="1.1"/><path d="M6.5 13.5 C7 14.5 9 14.5 9.5 13.5" fill="none" stroke="#fff" stroke-width="1"/><circle cx="12.5" cy="3.5" r="2.8" fill="#fff"/></svg>
</body></html>
